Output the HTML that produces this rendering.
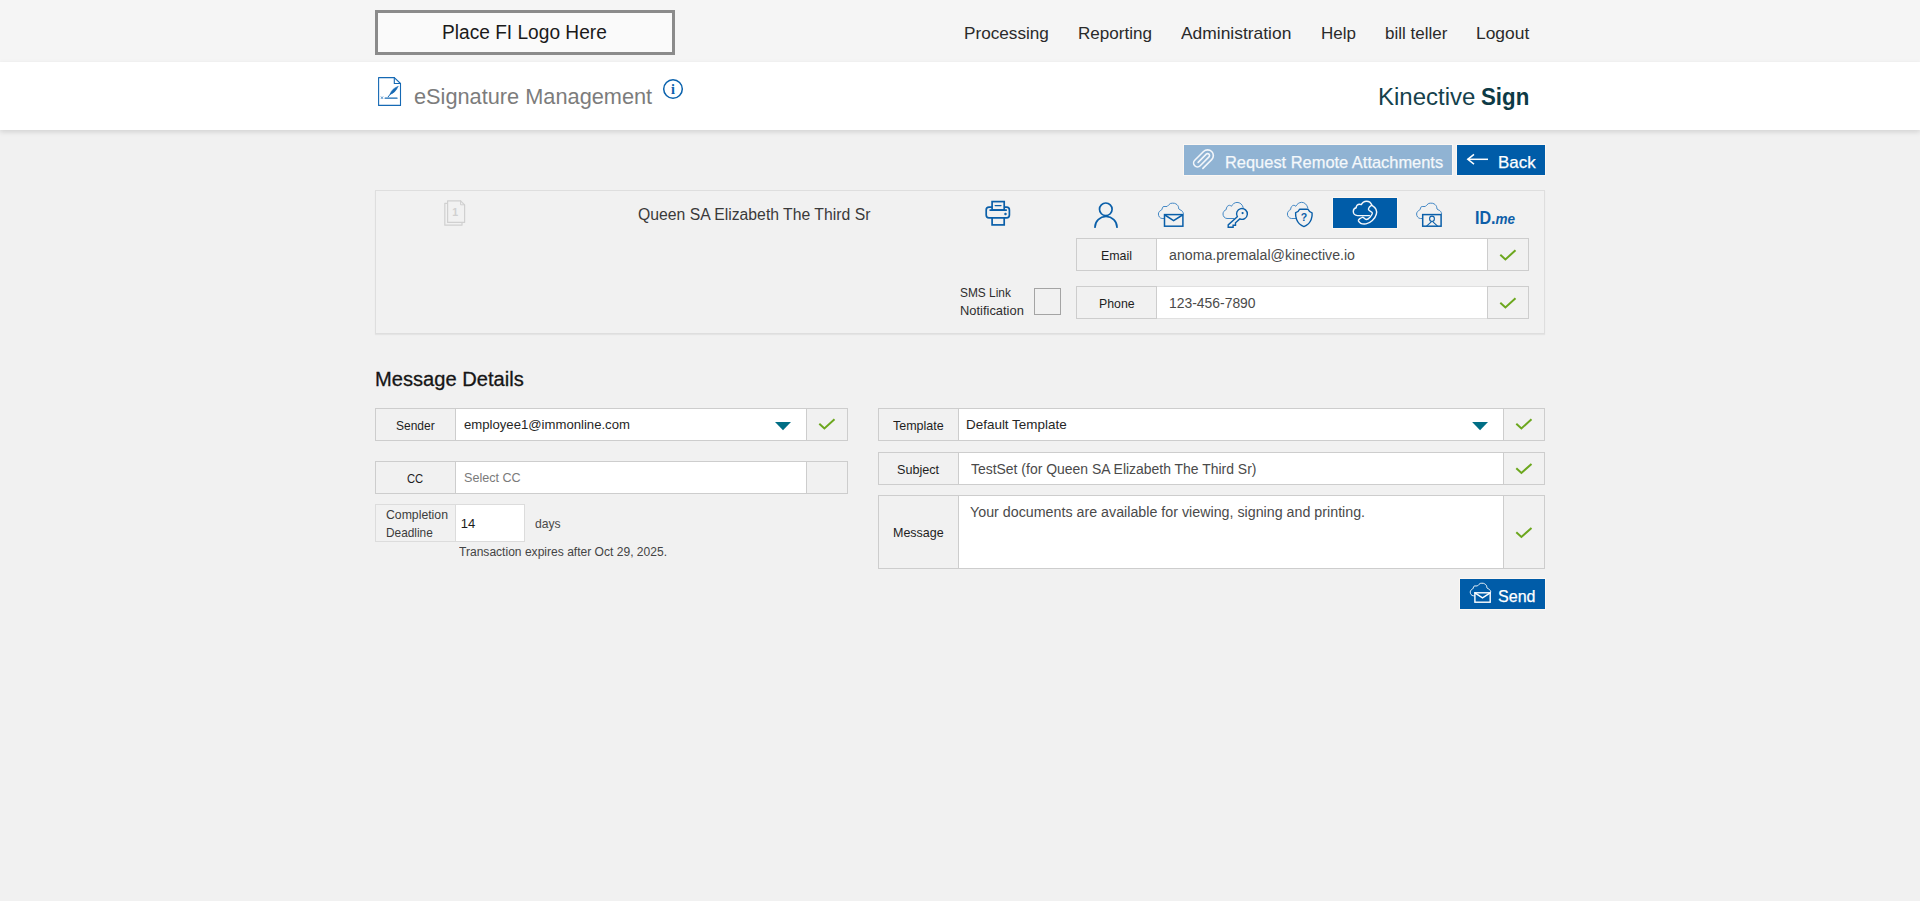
<!DOCTYPE html>
<html lang="en">
<head>
<meta charset="utf-8">
<title>eSignature Management</title>
<style>
*{box-sizing:border-box;margin:0;padding:0}
html,body{width:1920px;height:901px;overflow:hidden}
body{background:#f1f1f1;font-family:"Liberation Sans",sans-serif;color:#222;position:relative}
.abs,.t{position:absolute}
.t{white-space:nowrap;line-height:1;transform-origin:0 50%}
#topbar{left:0;top:0;width:1920px;height:62px;background:#f5f5f5}
#titleband{left:0;top:62px;width:1920px;height:68px;background:#fff;box-shadow:0 2px 5px rgba(0,0,0,.13)}
#logo{left:375px;top:10px;width:300px;height:45px;border:3px solid #8b8b8b;background:#fafafa}
.lbl{background:#f1f1f1;border:1px solid #cdcdcd}
.inp{background:#fff;border:1px solid #cdcdcd}
.btn{border:1px solid #fbf7f3}
#icons{left:0;top:0;width:1920px;height:901px;pointer-events:none}
</style>
</head>
<body>
<div id="topbar" class="abs"></div>
<div id="logo" class="abs"></div>
<span class="t" style="left:442.49px;top:22px;font-size:20px;color:#1a1a1a;transform:scaleX(0.9565);">Place FI Logo Here</span>
<span class="t" style="left:963.99px;top:25px;font-size:17px;color:#2a2a2a;transform:scaleX(1.0098);">Processing</span><span class="t" style="left:1077.75px;top:25px;font-size:17px;color:#2a2a2a;transform:scaleX(1.0035);">Reporting</span><span class="t" style="left:1181.00px;top:25px;font-size:17px;color:#2a2a2a;transform:scaleX(1.0243);">Administration</span><span class="t" style="left:1321.00px;top:25px;font-size:17px;color:#2a2a2a;transform:scaleX(1.0000);">Help</span><span class="t" style="left:1385.00px;top:25px;font-size:17px;color:#2a2a2a;transform:scaleX(1.0000);">bill teller</span><span class="t" style="left:1476.48px;top:25px;font-size:17px;color:#2a2a2a;transform:scaleX(1.0235);">Logout</span>

<div id="titleband" class="abs"></div>
<span class="t" style="left:414.01px;top:86px;font-size:22px;color:#7c7c7c;transform:scaleX(0.9885);">eSignature Management</span>
<span class="t" style="left:1377.51px;top:86px;font-size:23px;color:#15414c;transform:scaleX(1.0433);">Kinective</span><span class="t" style="left:1480.93px;top:86px;font-size:23px;color:#0d3a45;transform:scaleX(0.9681);"><b>Sign</b></span>

<!-- action buttons -->
<div class="abs btn" id="reqbtn" style="left:1183px;top:144px;width:270px;height:32px;background:#90b3d3"></div>
<span class="t" style="left:1224.67px;top:154px;font-size:17px;color:#f4f8fb;transform:scaleX(0.9659);-webkit-text-stroke:.25px #f4f8fb;">Request Remote Attachments</span>
<div class="abs btn" id="backbtn" style="left:1456px;top:144px;width:90px;height:32px;background:#005ca8"></div>
<span class="t" style="left:1498.31px;top:154px;font-size:17px;color:#fff;transform:scaleX(0.9971);-webkit-text-stroke:.25px #fff;">Back</span>

<!-- signer panel -->
<div class="abs" id="panel" style="left:375px;top:190px;width:1170px;height:144px;border:1px solid #dedede;box-shadow:0 1px 1px rgba(0,0,0,.05)"></div>
<span class="t" style="left:637.72px;top:207px;font-size:16px;color:#3a3a3a;transform:scaleX(0.9847);">Queen SA Elizabeth The Third Sr</span>
<div class="abs btn" id="selbox" style="left:1332px;top:197px;width:66px;height:32px;background:#005ca8"></div>
<span class="t" style="left:1475.13px;top:209px;font-size:18.5px;color:#0d5ea8;transform:scaleX(0.8711);"><b>ID.<i style="font-size:.84em">me</i></b></span>

<div class="abs lbl" style="left:1076px;top:238px;width:81px;height:33px"></div>
<span class="t" style="left:1100.65px;top:249px;font-size:13px;color:#1e1e1e;transform:scaleX(0.9548);">Email</span>
<div class="abs inp" style="left:1156px;top:238px;width:332px;height:33px"></div>
<span class="t" style="left:1169.49px;top:248px;font-size:14px;color:#4a4a4a;transform:scaleX(1.0115);">anoma.premalal@kinective.io</span>
<div class="abs lbl" style="left:1487px;top:238px;width:42px;height:33px"></div>

<div class="abs inp" style="left:1156px;top:286px;width:332px;height:33px;border-color:#e0e0e0"></div>
<div class="abs lbl" style="left:1076px;top:286px;width:81px;height:33px"></div>
<span class="t" style="left:1098.55px;top:297px;font-size:13px;color:#1e1e1e;transform:scaleX(0.9472);">Phone</span>
<span class="t" style="left:1169.21px;top:296px;font-size:14px;color:#4a4a4a;transform:scaleX(0.9930);">123-456-7890</span>
<div class="abs lbl" style="left:1487px;top:286px;width:42px;height:33px"></div>

<span class="t" style="left:959.69px;top:286px;font-size:13px;color:#2e2e2e;transform:scaleX(0.9145);">SMS Link</span>
<span class="t" style="left:959.61px;top:304px;font-size:13px;color:#2e2e2e;transform:scaleX(0.9921);">Notification</span>
<div class="abs" id="smscb" style="left:1034px;top:288px;width:27px;height:27px;border:1px solid #a4a4a4;background:#f1f1f1"></div>

<!-- message details -->
<span class="t" style="left:374.69px;top:369px;font-size:20px;color:#161616;transform:scaleX(1.0062);-webkit-text-stroke:.3px #161616;">Message Details</span>

<div class="abs lbl" style="left:375px;top:408px;width:81px;height:33px"></div>
<span class="t" style="left:395.68px;top:419px;font-size:13px;color:#1e1e1e;transform:scaleX(0.9220);">Sender</span>
<div class="abs inp" style="left:455px;top:408px;width:352px;height:33px"></div>
<span class="t" style="left:464.19px;top:418px;font-size:13px;color:#262626;transform:scaleX(1.0104);">employee1@immonline.com</span>
<div class="abs lbl" style="left:806px;top:408px;width:42px;height:33px"></div>

<div class="abs lbl" style="left:375px;top:461px;width:81px;height:33px"></div>
<span class="t" style="left:407.44px;top:472px;font-size:13px;color:#1e1e1e;transform:scaleX(0.8647);">CC</span>
<div class="abs inp" style="left:455px;top:461px;width:352px;height:33px"></div>
<span class="t" style="left:464.23px;top:471px;font-size:13px;color:#7a7a7a;transform:scaleX(0.9684);">Select CC</span>
<div class="abs lbl" style="left:806px;top:461px;width:42px;height:33px"></div>

<div class="abs lbl" style="left:375px;top:504px;width:81px;height:38px;border-color:#dcdcdc"></div>
<span class="t" style="left:386.26px;top:508px;font-size:13px;color:#3c3c3c;transform:scaleX(0.9422);">Completion</span>
<span class="t" style="left:386.29px;top:526px;font-size:13px;color:#3c3c3c;transform:scaleX(0.9120);">Deadline</span>
<div class="abs inp" style="left:455px;top:504px;width:70px;height:38px;border-color:#dcdcdc"></div>
<span class="t" style="left:460.70px;top:517px;font-size:13px;color:#1c1c1c;transform:scaleX(1.0000);">14</span>
<span class="t" style="left:535.07px;top:517px;font-size:13px;color:#4a4a4a;transform:scaleX(0.9346);">days</span>
<span class="t" style="left:459.40px;top:546px;font-size:12px;color:#444;transform:scaleX(1.0049);">Transaction expires after Oct 29, 2025.</span>

<div class="abs lbl" style="left:878px;top:408px;width:81px;height:33px"></div>
<span class="t" style="left:893.00px;top:419px;font-size:13px;color:#1e1e1e;transform:scaleX(0.9615);">Template</span>
<div class="abs inp" style="left:958px;top:408px;width:546px;height:33px"></div>
<span class="t" style="left:965.97px;top:418px;font-size:13px;color:#262626;transform:scaleX(1.0344);">Default Template</span>
<div class="abs lbl" style="left:1503px;top:408px;width:42px;height:33px"></div>

<div class="abs lbl" style="left:878px;top:452px;width:81px;height:33px"></div>
<span class="t" style="left:896.53px;top:463px;font-size:13px;color:#1e1e1e;transform:scaleX(0.9714);">Subject</span>
<div class="abs inp" style="left:958px;top:452px;width:546px;height:33px"></div>
<span class="t" style="left:970.80px;top:462px;font-size:14px;color:#4a4a4a;transform:scaleX(0.9958);">TestSet (for Queen SA Elizabeth The Third Sr)</span>
<div class="abs lbl" style="left:1503px;top:452px;width:42px;height:33px"></div>

<div class="abs lbl" style="left:878px;top:495px;width:81px;height:74px"></div>
<span class="t" style="left:892.64px;top:526px;font-size:13px;color:#1e1e1e;transform:scaleX(0.9608);">Message</span>
<div class="abs inp" style="left:958px;top:495px;width:546px;height:74px"></div>
<span class="t" style="left:969.78px;top:505px;font-size:14px;color:#4a4a4a;transform:scaleX(1.0187);">Your documents are available for viewing, signing and printing.</span>
<div class="abs lbl" style="left:1503px;top:495px;width:42px;height:74px"></div>

<div class="abs btn" id="sendbtn" style="left:1459px;top:578px;width:87px;height:32px;background:#005ca8"></div>
<span class="t" style="left:1498.06px;top:588px;font-size:17px;color:#fff;transform:scaleX(0.9447);-webkit-text-stroke:.25px #fff;">Send</span>

<svg id="icons" class="abs" width="1920" height="901" viewBox="0 0 1920 901" fill="none" stroke-linecap="round" stroke-linejoin="round">
<defs>
<path id="cloud" d="M5.5 15.6H4C1.8 15.4 0.3 13.4 0.3 11.1C0.3 9.3 1.6 7.9 3.2 7.3C3.9 6.9 4.1 5.7 4.3 4.9C4.6 4 5 3.6 5.9 3.6H9C10 2.6 11.2 1.2 12.5 0.5C13.6 0.2 15.3 0.2 16.4 0.4C18.4 1 19.8 2.3 20.3 3.8C20.6 4.6 20.5 5.4 20.7 6.1C21.2 6.8 22.2 6.9 23 7.4C24.2 8.1 25 9.2 25.3 10.6"/>
<path id="chk" d="M-5.1 -0.7L0 4L10.1 -5.1"/>
</defs>

<!-- eSignature doc icon -->
<g stroke="#1569b4" stroke-width="1.1">
<path d="M378.6 77.6H394.3L400.5 83.5V105.4H378.6Z"/>
<path d="M394.3 77.6V83.5H400.5"/>
<path d="M385.2 98.2H397" stroke-width="1.3"/>
<path d="M388.2 96.8L392.5 91.5" stroke-width="1"/>
<path d="M398 86.4C394.1 87.5 391.1 90.6 390 94.4C393.5 93.3 396.6 90.6 398 86.4Z" fill="#1569b4" stroke-width=".5"/>
<path d="M381.2 96.8L382.8 98.6M382.8 96.8L381.2 98.6" stroke-width=".7"/>
</g>

<!-- info icon -->
<circle cx="673" cy="89" r="9.3" stroke="#0a62ad" stroke-width="1.5"/>
<text x="673" y="94" text-anchor="middle" font-family="Liberation Serif, serif" font-weight="bold" font-size="14" fill="#0a62ad" stroke="none">i</text>

<!-- paperclip -->
<g transform="translate(1192.3 147.9) scale(.957) matrix(0 1 1 0 0 0)" stroke="#f3f6fa" stroke-width="1.7">
<path d="M21.44 11.05l-9.19 9.19a6 6 0 0 1-8.49-8.49l9.19-9.19a4 4 0 0 1 5.66 5.66l-9.2 9.19a2 2 0 0 1-2.83-2.83l8.49-8.48"/>
</g>

<!-- back arrow -->
<g stroke="#fff" stroke-width="1.5" stroke-linecap="butt" stroke-linejoin="miter">
<path d="M1467.8 159.3H1488"/>
<path d="M1474 154.4L1467.8 159.3L1474 164.2"/>
</g>

<!-- copies icon -->
<g stroke="#d0d0d0" stroke-width="1.2">
<path d="M446.8 203.3H444.8V225.2H462V222.8"/>
<path d="M447.6 200.8H460.6L464.6 204.8V222.4H447.6Z"/>
<path d="M460.6 200.8V204.8H464.6" stroke-width="1"/>
</g>
<text x="455.2" y="216" text-anchor="middle" font-family="Liberation Sans, sans-serif" font-weight="bold" font-size="10.5" fill="#d0d0d0" stroke="none">1</text>

<!-- printer -->
<g stroke="#0a5fa9" stroke-width="1.7" stroke-linejoin="miter">
<rect x="986.2" y="207.1" width="23.2" height="10.8" rx="2.8"/>
<rect x="992.1" y="201.6" width="12.1" height="8.4" fill="#f1f1f1"/>
<path d="M990.2 210.1H1006.2" stroke-width="1.9"/>
<path d="M995.2 205.6H1001" stroke-width="1.4"/>
<rect x="992.1" y="217.9" width="12.1" height="7" fill="#f1f1f1"/>
<circle cx="1005.4" cy="214" r=".9" fill="#0a5fa9" stroke-width=".6"/>
</g>

<!-- person -->
<g stroke="#0a5fa9" stroke-width="1.7">
<circle cx="1105.8" cy="209.3" r="6.3"/>
<path d="M1095 227.2A11 10.7 0 0 1 1117 227.2"/>
</g>

<!-- cloud mail -->
<use href="#cloud" x="1158.1" y="202.9" stroke="#3a82c2" stroke-width=".95"/>
<g stroke="#0a5fa9" stroke-width="1.5" stroke-linejoin="miter">
<rect x="1164.5" y="214.6" width="18.4" height="11.6" fill="#f1f1f1"/>
<path d="M1164.9 215L1173.6 220.6L1182.5 215"/>
</g>

<!-- cloud key -->
<path d="M1234 218.5H1227C1224.6 218.3 1223 216.3 1223 214C1223 212 1224.3 210.4 1226.2 209.6C1226.3 207.2 1227.6 205.4 1229.4 205.3C1230.2 205.3 1230.9 205.7 1231.4 206.3C1232.6 204 1234.6 202.5 1237 202.4C1240 202.4 1242.4 204.4 1243.2 207.4" stroke="#3a82c2" stroke-width=".95"/>
<path d="M1237.3 216.7L1228.2 224.9V227.2H1233.1V225.2H1235.5V222.8L1239.8 218.9A5.4 5.4 0 1 0 1237.3 216.7Z" fill="#f1f1f1" stroke="#0a5fa9" stroke-width="1.4" stroke-linejoin="miter"/>
<circle cx="1242.6" cy="213.1" r="1.1" fill="#0a5fa9"/>

<!-- cloud shield -->
<path d="M1296 218.5H1291.4C1289 218.3 1287.4 216.3 1287.4 214C1287.4 212 1288.7 210.4 1290.6 209.6C1290.7 207.2 1292 205.4 1293.8 205.3C1294.6 205.3 1295.3 205.7 1295.8 206.3C1297 204 1299.2 202.4 1301.6 202.3C1304.6 202.3 1307 204.6 1307.8 207.8" stroke="#3a82c2" stroke-width=".95"/>
<path d="M1299.6 209.3H1308C1308.8 211.2 1310.2 212.5 1312.1 212.9C1312.4 216 1311.8 218 1311.2 219.5C1309.8 223 1307.2 225.4 1303.9 226.6C1300.6 225.4 1298 223 1296.6 219.5C1296 218 1295.4 216 1295.6 212.6C1297.5 212.2 1298.8 211.2 1299.6 209.3Z" fill="#f1f1f1" stroke="#0a5fa9" stroke-width="1.4"/>
<text x="1304" y="220.8" text-anchor="middle" font-family="Liberation Sans, sans-serif" font-weight="bold" font-size="10.5" fill="#0a5fa9" stroke="none">?</text>

<!-- cloud phone (selected) -->
<g stroke="#f4f7fb" stroke-width="1.4">
<path d="M1369.4 215.6H1357.5C1354.8 215.6 1353.3 213.6 1353.3 211.6C1353.3 209.6 1354.6 208.2 1356.2 207.8C1356 205.6 1357.6 204.2 1359.6 204.2C1360.2 204.2 1360.8 204.3 1361.3 204.6C1362.3 202.5 1364.2 201.2 1366.5 201.2C1369 201.2 1371 202.8 1371.8 205"/>
<path d="M1372 205.4C1375.5 207.5 1377.2 211 1376.3 214.2C1375 219 1370.5 223.2 1366 223.9C1362.5 224.4 1359.5 222.8 1358.4 220.8C1358 219.8 1360.5 217.8 1362.3 217.3C1363.8 217 1364.5 219.2 1366.2 219.5C1368.5 219.5 1372 215.5 1372.4 213.2C1372.6 211.5 1369 211.2 1368.5 209.6C1368.2 208 1370.2 205.6 1372 205.4Z"/>
</g>

<!-- cloud person -->
<use href="#cloud" x="1416.3" y="202.9" stroke="#3a82c2" stroke-width=".95"/>
<g stroke="#0a5fa9" stroke-width="1.5" stroke-linejoin="miter">
<rect x="1422.7" y="214.6" width="18.4" height="11.6" fill="#f1f1f1"/>
<ellipse cx="1432" cy="218.8" rx="2.4" ry="2.7" stroke-width="1.1"/>
<path d="M1431 222.2L1426.8 225.8M1433.2 222.2L1437.3 225.8" stroke-width="1.1"/>
</g>

<!-- checks -->
<g stroke="#6ca71e" stroke-width="2" stroke-linecap="butt" stroke-linejoin="miter">
<use href="#chk" x="1505.4" y="255.4"/>
<use href="#chk" x="1505.4" y="303.4"/>
<use href="#chk" x="824.4" y="424.4"/>
<use href="#chk" x="1521.4" y="424.4"/>
<use href="#chk" x="1521.4" y="469"/>
<use href="#chk" x="1521.4" y="533"/>
</g>

<!-- dropdown arrows -->
<path d="M775 422H791L783 430.2Z" fill="#006e85" stroke="none"/>
<path d="M1472.1 422H1488L1480.05 430.2Z" fill="#006e85" stroke="none"/>

<!-- send icon -->
<g stroke="#fff">
<use href="#cloud" transform="translate(1470 583) scale(.82)" stroke-width="1.1"/>
<rect x="1474.9" y="592.8" width="15.3" height="9.4" fill="#005ca8" stroke-width="1.4" stroke-linejoin="miter"/>
<path d="M1474.9 592.8L1482.5 597.8L1490.2 592.8" stroke-width="1.4" stroke-linejoin="miter"/>
</g>
</svg>

</body>
</html>
